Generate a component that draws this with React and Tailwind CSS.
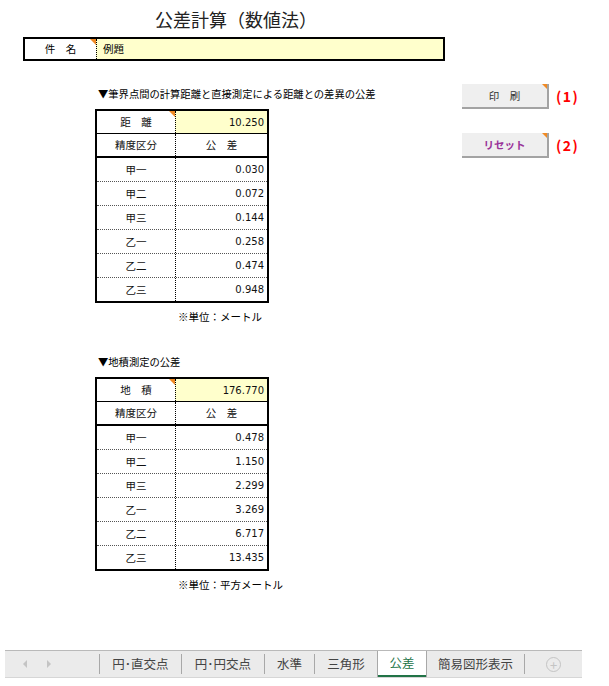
import React from "react";

const JP = { fontFamily: '"Noto Sans CJK JP", "Noto Sans", sans-serif' };
const NUM = { fontFamily: '"DejaVu Sans", "Liberation Sans", sans-serif' };

function Tri({ className = "" }) {
  return (
    <div
      className={
        "absolute top-0 right-0 w-0 h-0 border-t-[6px] border-t-[#f08a24] border-l-[6px] border-l-transparent " +
        className
      }
    />
  );
}

function ToleranceTable({ label, value, rows }) {
  return (
    <div className="w-[174px] border-2 border-black text-[10.5px] text-[#111]">
      <div className="flex h-[23px] border-b border-black">
        <div className="relative w-[78px] flex items-center justify-center" style={JP}>
          {label}
          <Tri />
        </div>
        <div
          className="flex-1 bg-[#ffffcc] border-l border-dotted border-black flex items-center justify-end pr-[3px] text-[10px]"
          style={NUM}
        >
          {value}
        </div>
      </div>
      <div className="flex h-[24px] border-b-2 border-black">
        <div className="w-[78px] flex items-center justify-center" style={JP}>
          精度区分
        </div>
        <div className="flex-1 border-l border-dotted border-black flex items-center justify-center" style={JP}>
          公　差
        </div>
      </div>
      {rows.map(([k, v], i) => (
        <div
          key={k}
          className={
            "flex " +
            (i < rows.length - 1 ? "h-[24px] border-b border-dotted border-[#555]" : "h-[23px]")
          }
        >
          <div className="w-[78px] flex items-center justify-center" style={JP}>
            {k}
          </div>
          <div
            className="flex-1 border-l border-dotted border-black flex items-center justify-end pr-[3px] text-[10px]"
            style={NUM}
          >
            {v}
          </div>
        </div>
      ))}
    </div>
  );
}

function Btn({ children, textClass, mark }) {
  return (
    <div className="flex items-center">
      <div className="relative w-[87px] h-[25px] bg-[#efefef] border-r-2 border-b-2 border-[#a3a3a3] flex items-center justify-center">
        <span className={"text-[10.5px] " + textClass} style={JP}>
          {children}
        </span>
        <Tri className="!border-t-[5px] !border-l-[5px]" />
      </div>
      <span className="ml-[7px] text-[14px] font-bold tracking-[1.5px] text-[#ff0000]" style={JP}>
        {mark}
      </span>
    </div>
  );
}

function TabDivider() {
  return <div className="w-px bg-[#a8a8a8] my-[3px]" />;
}

function Tab({ children, w }) {
  return (
    <div
      className={"flex items-center justify-center text-[12.5px] text-[#444]"}
      style={{ ...JP, width: w }}
    >
      {children}
    </div>
  );
}

export default function App() {
  const rows1 = [
    ["甲一", "0.030"],
    ["甲二", "0.072"],
    ["甲三", "0.144"],
    ["乙一", "0.258"],
    ["乙二", "0.474"],
    ["乙三", "0.948"],
  ];
  const rows2 = [
    ["甲一", "0.478"],
    ["甲二", "1.150"],
    ["甲三", "2.299"],
    ["乙一", "3.269"],
    ["乙二", "6.717"],
    ["乙三", "13.435"],
  ];
  return (
    <div className="w-[609px] h-[686px] bg-white flex flex-col text-black overflow-hidden" style={JP}>
      <div className="pt-[8px] pl-[155px] text-[18px] leading-[22px] text-[#222]">公差計算（数値法）</div>

      <div className="mt-[7px] ml-[23px] w-[422px] h-[24px] border-2 border-black flex text-[10.5px]">
        <div className="relative w-[71px] flex items-center justify-center">
          件　名
          <Tri />
        </div>
        <div className="flex-1 bg-[#ffffcc] border-l border-dotted border-black flex items-center pl-[6px]">例題</div>
      </div>

      <div className="flex">
        <div className="ml-[95px] w-[300px] pt-[26px] flex flex-col">
          <div className="pl-[3px] text-[10.3px] leading-[14px] whitespace-nowrap">
            ▼筆界点間の計算距離と直接測定による距離との差異の公差
          </div>
          <div className="mt-[8px]">
            <ToleranceTable label="距　離" value="10.250" rows={rows1} />
          </div>
          <div className="mt-[7px] ml-[83px] text-[10.5px] leading-[14px]">※単位：メートル</div>

          <div className="mt-[31px] pl-[3px] text-[10.3px] leading-[14px]">▼地積測定の公差</div>
          <div className="mt-[8px]">
            <ToleranceTable label="地　積" value="176.770" rows={rows2} />
          </div>
          <div className="mt-[7px] ml-[83px] text-[10.5px] leading-[14px]">※単位：平方メートル</div>
        </div>

        <div className="ml-[67px] pt-[23px] flex flex-col gap-[24px]">
          <Btn textClass="text-[#333]" mark="(1)">
            印　刷
          </Btn>
          <Btn textClass="text-[#993399] font-bold" mark="(2)">
            リセット
          </Btn>
        </div>
      </div>

      <div className="mt-auto mb-[8px] ml-[5px] w-[577px] h-[28px] bg-[#ebebeb] border-t border-t-[#b9b9b9] border-b border-b-[#d6d6d6] flex items-stretch">
        <div className="w-[94px] flex items-center">
          <div className="ml-[18px] w-0 h-0 border-y-[4px] border-y-transparent border-r-[4px] border-r-[#c4c4c4]" />
          <div className="ml-[20px] w-0 h-0 border-y-[4px] border-y-transparent border-l-[4px] border-l-[#c4c4c4]" />
        </div>
        <TabDivider />
        <Tab w={81}>円･直交点</Tab>
        <TabDivider />
        <Tab w={82}>円･円交点</Tab>
        <TabDivider />
        <Tab w={49}>水準</Tab>
        <TabDivider />
        <Tab w={62}>三角形</Tab>
        <div className="w-[50px] bg-white border-x border-[#a8a8a8] flex flex-col">
          <div className="flex-1 flex items-center justify-center text-[12.5px] text-[#217346]">公差</div>
          <div className="h-[2px] bg-[#217346]" />
        </div>
        <Tab w={97}>簡易図形表示</Tab>
        <TabDivider />
        <div className="flex-1 flex items-center justify-center">
          <div className="w-[15px] h-[15px] rounded-full border border-[#c4c4c4] flex items-center justify-center text-[#c4c4c4] text-[13px] leading-none">
            +
          </div>
        </div>
      </div>
    </div>
  );
}
